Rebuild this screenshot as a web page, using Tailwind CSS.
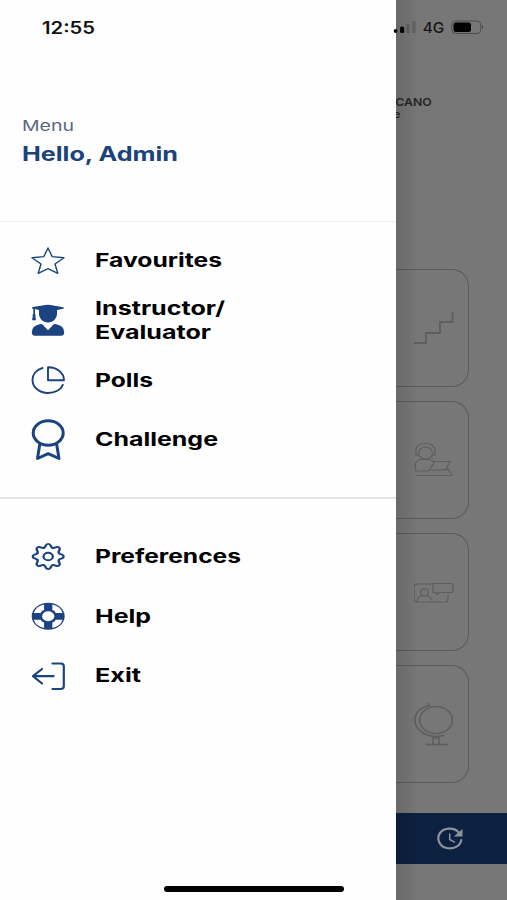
<!DOCTYPE html>
<html lang="en">
<head>
<meta charset="utf-8">
<title>Menu</title>
<script src="https://cdn.jsdelivr.net/npm/@tailwindcss/browser@4"></script>
</head>
<body class="m-0">
<div class="relative flex h-[900px] w-[507px] overflow-hidden bg-[#777777] font-['Inter',sans-serif]">

  <!-- Drawer -->
  <aside class="flex h-full w-[395.5px] shrink-0 flex-col bg-[#fefefe] text-[#1b4380]">
    <header class="flex h-[222px] flex-col border-b border-[#f0f0f0]">
      <svg class="ml-[42px] mt-[17.5px] h-5 w-[54px] overflow-visible fill-[#111111] text-[17px] font-semibold"><text x="0" y="16" textLength="53" lengthAdjust="spacingAndGlyphs">12:55</text></svg>
      <svg class="ml-[22px] mt-[77.5px] h-5 w-[54px] overflow-visible fill-[#5b6780] text-[15px]"><text x="0" y="15.5" textLength="52" lengthAdjust="spacingAndGlyphs">Menu</text></svg>
      <svg class="ml-[22px] mt-[8px] h-6 w-[158px] overflow-visible fill-[#1c427c] text-[19.5px] font-bold"><text x="0" y="18.4" textLength="156" lengthAdjust="spacingAndGlyphs">Hello, Admin</text></svg>
    </header>

    <nav class="flex h-[277px] flex-col border-b-2 border-[#e4e4e4] pt-[8px] pl-[31px]">
      <a class="flex h-[60px] items-center gap-[29.5px]">
        <svg class="h-[42px] w-[34px] shrink-0" viewBox="0 0 34 42" fill="none" stroke="currentColor" stroke-width="1.4" stroke-linejoin="round"><path d="M17 9L21.2 17.6L33 18.7L24 25L26.8 34.4L17 29.7L7.2 34.4L10 25L1 18.7L12.8 17.6Z"/></svg>
        <svg class="h-6 w-[128px] overflow-visible fill-black text-[19px] font-bold"><text x="0" y="19.3" textLength="127" lengthAdjust="spacingAndGlyphs">Favourites</text></svg>
      </a>
      <a class="flex h-[60px] items-center gap-[29.5px]">
        <svg class="h-[42px] w-[34px] shrink-0" viewBox="0 0 34 42" fill="currentColor"><path d="M1 9.4Q0 8.8 2 8L14.5 6Q17 5.6 19.5 6L32 8.2Q34 9 32 9.7L26 11V14.5C26 19.7 22 23.4 17 23.4S8 19.7 8 14.5V11L4 10.1V15Q5.1 15.8 4.4 16.9L5 21.2H1L1.8 16.9Q.9 15.8 2.3 15V9.8Z"/><path d="M8.5 25.3Q10.3 24.7 11.5 25.5L17 31.2L22.5 25.5Q23.7 24.7 25.5 25.3Q33.2 27 33.2 33.3Q33.2 36.7 30 36.7H4Q.8 36.7 .8 33.3Q.8 27 8.5 25.3Z"/></svg>
        <svg class="h-12 w-[132px] overflow-visible fill-black text-[19px] font-bold"><text x="0" y="19.3" textLength="130" lengthAdjust="spacingAndGlyphs">Instructor/</text><text x="0" y="42.5" textLength="116" lengthAdjust="spacingAndGlyphs">Evaluator</text></svg>
      </a>
      <a class="flex h-[60px] items-center gap-[29.5px]">
        <svg class="h-[42px] w-[34px] shrink-0" viewBox="0 0 34 42" fill="none" stroke="currentColor" stroke-width="1.9" stroke-linejoin="round" stroke-linecap="round"><path d="M11.5 9C5.2 10.7 1.5 15.5 1.5 21C1.5 28.5 8.5 34 17 34C24 34 30 30.7 31.8 25.8"/><path d="M17 8.3V21.3H33C33 13.7 26 8.3 17 8.3Z"/></svg>
        <svg class="h-6 w-[60px] overflow-visible fill-black text-[19px] font-bold"><text x="0" y="18.5" textLength="58" lengthAdjust="spacingAndGlyphs">Polls</text></svg>
      </a>
      <a class="flex h-[60px] items-center gap-[29.5px]">
        <svg class="h-[42px] w-[34px] shrink-0" viewBox="0 0 34 42" fill="none" stroke="currentColor" stroke-width="3" stroke-linejoin="round"><ellipse cx="17.2" cy="14" rx="15" ry="12.2"/><path d="M8.8 25L6.5 39.5L17.2 34.7L28 39.5L25.6 25"/></svg>
        <svg class="h-6 w-[124px] overflow-visible fill-black text-[19px] font-bold"><text x="0" y="18.3" textLength="123" lengthAdjust="spacingAndGlyphs">Challenge</text></svg>
      </a>
    </nav>

    <nav class="flex flex-col pt-[27px] pl-[31px]">
      <a class="flex h-[60px] items-center gap-[29.5px]">
        <svg class="h-[42px] w-[34px] shrink-0" viewBox="0 0 34 42" fill="none" stroke="currentColor" stroke-width="1.9" stroke-linecap="round"><defs><path id="tooth" d="M-3.6 -8.7C-1.5 -9.4 -2.8 -12.6 0 -12.6C2.8 -12.6 1.5 -9.4 3.6 -8.7"/></defs><g transform="translate(17.2 21.5) scale(1.22 1)"><use href="#tooth"/><use href="#tooth" transform="rotate(45)"/><use href="#tooth" transform="rotate(90)"/><use href="#tooth" transform="rotate(135)"/><use href="#tooth" transform="rotate(180)"/><use href="#tooth" transform="rotate(225)"/><use href="#tooth" transform="rotate(270)"/><use href="#tooth" transform="rotate(315)"/><circle r="3.8"/></g></svg>
        <svg class="h-6 w-[147px] overflow-visible fill-black text-[19px] font-bold"><text x="0" y="18.6" textLength="146" lengthAdjust="spacingAndGlyphs">Preferences</text></svg>
      </a>
      <a class="flex h-[60px] items-center gap-[29.5px]">
        <svg class="h-[42px] w-[34px] shrink-0" viewBox="0 0 34 42"><g transform="translate(17.2 21.3) scale(1.22 1)"><circle r="13.5" fill="currentColor"/><path d="M-3.4 -11.8V-6.2Q-5.5 -5.5 -6.2 -3.4H-11.8Q-10.2 -9.8 -3.4 -11.8ZM3.4 -11.8V-6.2Q5.5 -5.5 6.2 -3.4H11.8Q10.2 -9.8 3.4 -11.8ZM-3.4 11.8V6.2Q-5.5 5.5 -6.2 3.4H-11.8Q-10.2 9.8 -3.4 11.8ZM3.4 11.8V6.2Q5.5 5.5 6.2 3.4H11.8Q10.2 9.8 3.4 11.8Z" fill="#fefefe"/><circle r="5" fill="#fefefe"/></g></svg>
        <svg class="h-6 w-[58px] overflow-visible fill-black text-[19px] font-bold"><text x="0" y="18.5" textLength="56" lengthAdjust="spacingAndGlyphs">Help</text></svg>
      </a>
      <a class="flex h-[60px] items-center gap-[29.5px]">
        <svg class="h-[42px] w-[34px] shrink-0" viewBox="0 0 34 42" fill="none" stroke="currentColor" stroke-width="2.2" stroke-linejoin="round" stroke-linecap="round"><path d="M21.5 8.5H29.8Q32.8 8.5 32.8 11.3V31.3Q32.8 34 29.8 34H21.5M22.5 21.2H2M11 14L2 21.2L11 28.5"/></svg>
        <svg class="h-6 w-[48px] overflow-visible fill-black text-[19px] font-bold"><text x="0" y="18.3" textLength="46" lengthAdjust="spacingAndGlyphs">Exit</text></svg>
      </a>
    </nav>
  </aside>

  <!-- Dimmed page -->
  <main class="flex h-full min-w-0 flex-1 flex-col">
    <div class="h-[269px] shrink-0">
      <svg class="h-[269px] w-[111px] overflow-visible" viewBox="0 0 111 269">
        <g fill="#080808"><circle cx="-.4" cy="31" r="1.9"/><rect x="4" y="26.5" width="4.2" height="6.5" rx="1.5"/></g>
        <g fill="#626262"><rect x="10.2" y="24" width="3.5" height="9" rx="1"/><rect x="16.2" y="21" width="3.5" height="12" rx="1"/></g>
        <text class="text-[14px] font-medium" x="26.8" y="32.5" fill="#151515" textLength="21.5" lengthAdjust="spacingAndGlyphs">4G</text>
        <rect x="55.8" y="21" width="29" height="12.5" rx="4" fill="none" stroke="#4c4c4c"/><rect x="57.5" y="22.5" width="17.5" height="9.5" rx="2.5" fill="#000"/><path d="M86 25Q88.3 27 86 29.2Z" fill="#444"/>
        <svg x="0" y="90" width="60" height="40"><text class="text-[11px] font-semibold" x="-.8" y="16.3" fill="#252525" textLength="36.5" lengthAdjust="spacingAndGlyphs">CANO</text><text class="text-[10px] font-semibold" x="-3" y="28" fill="#252525" textLength="7.5" lengthAdjust="spacingAndGlyphs">e</text></svg>
      </svg>
    </div>
    <section class="flex flex-col gap-[14px] text-[#5e5e5e]">
      <div class="flex h-[118px] w-[73px] items-center justify-end rounded-r-[17px] border border-b-[1.5px] border-l-0 border-[#5b5b5b] pr-[14px]">
        <svg class="h-10 w-10" viewBox="0 0 40 40" fill="none" stroke="currentColor" stroke-width="1.8"><path d="M0 35H12V25H26V14H38.5V4"/></svg>
      </div>
      <div class="flex h-[118px] w-[73px] items-center justify-end rounded-r-[17px] border border-b-[1.5px] border-l-0 border-[#5b5b5b] pr-[14px]">
        <svg class="h-10 w-10" viewBox="0 0 40 40" fill="none" stroke="currentColor" stroke-width="1.2"><ellipse cx="11.5" cy="13" rx="7" ry="6"/><path d="M2 15V9.5C4 1.5 19 1.5 21 9.5V15M2 10.5V15H4.5M21 10.5V15H18M6 19.5H16L20.5 22L15 31H2Q-1 22 6 19.5ZM19 21.5H36L32 30H15M28 30L34 29L38 35.5H2"/></svg>
      </div>
      <div class="flex h-[118px] w-[73px] items-center justify-end rounded-r-[17px] border border-b-[1.5px] border-l-0 border-[#5b5b5b] pr-[14px]">
        <svg class="h-10 w-10" viewBox="0 0 40 40" fill="none" stroke="currentColor" stroke-width="1.2"><path d="M18 12H3Q0 12 0 15V27Q0 30 3 30H32Q34 30 34 27V22M20 11.5H37Q39 11.5 39 13.5V18.5Q39 20.5 37 20.5H25L23 22.5L22 20.5H19V13.5Q18 11.5 20 11.5ZM3 29Q4 24 9 23.5H12Q17 24 18 29"/><ellipse cx="10.5" cy="20.3" rx="4" ry="3.5"/></svg>
      </div>
      <div class="flex h-[118px] w-[73px] items-center justify-end rounded-r-[17px] border border-b-[1.5px] border-l-0 border-[#5b5b5b] pr-[14px]">
        <svg class="h-[44px] w-10" viewBox="0 0 40 44" fill="none" stroke="currentColor" stroke-width="1.6"><ellipse cx="22" cy="18" rx="16.3" ry="13.5"/><path d="M14 1L15 3.5C4 6 1 13 1 18.5C1 28 12 35 24 34.5L30 33.5M19 34.5V42M25 34.5V42M11 42.5H34M19 36H25"/></svg>
      </div>
    </section>
    <footer class="mt-[30px] flex h-[51px] w-full shrink-0 items-center justify-center bg-[#0c2040] text-[#8d939e]">
      <svg class="mr-[2px] h-[26px] w-7" viewBox="0 0 28 26" fill="none" stroke="currentColor" stroke-width="2.2"><path d="M23 6.7C18 .8 8 1.8 4 7C-.2 13 4 20.5 10.5 22C18 23.7 25 19.5 25.3 13.2"/><path d="M13.7 7.5V13.5L19 16.3" stroke-width="1.5"/><path d="M26.5 3V10.5H17.8Z" fill="currentColor" stroke="none"/></svg>
    </footer>
  </main>

  <!-- Drawer shadow and home indicator -->
  <div class="pointer-events-none absolute top-0 left-[396px] h-full w-[22px] bg-linear-to-r from-black/12 to-transparent"></div>
  <div class="absolute top-[886px] left-[164px] h-[6px] w-[180px] rounded-full bg-black"></div>
</div>
</body>
</html>
